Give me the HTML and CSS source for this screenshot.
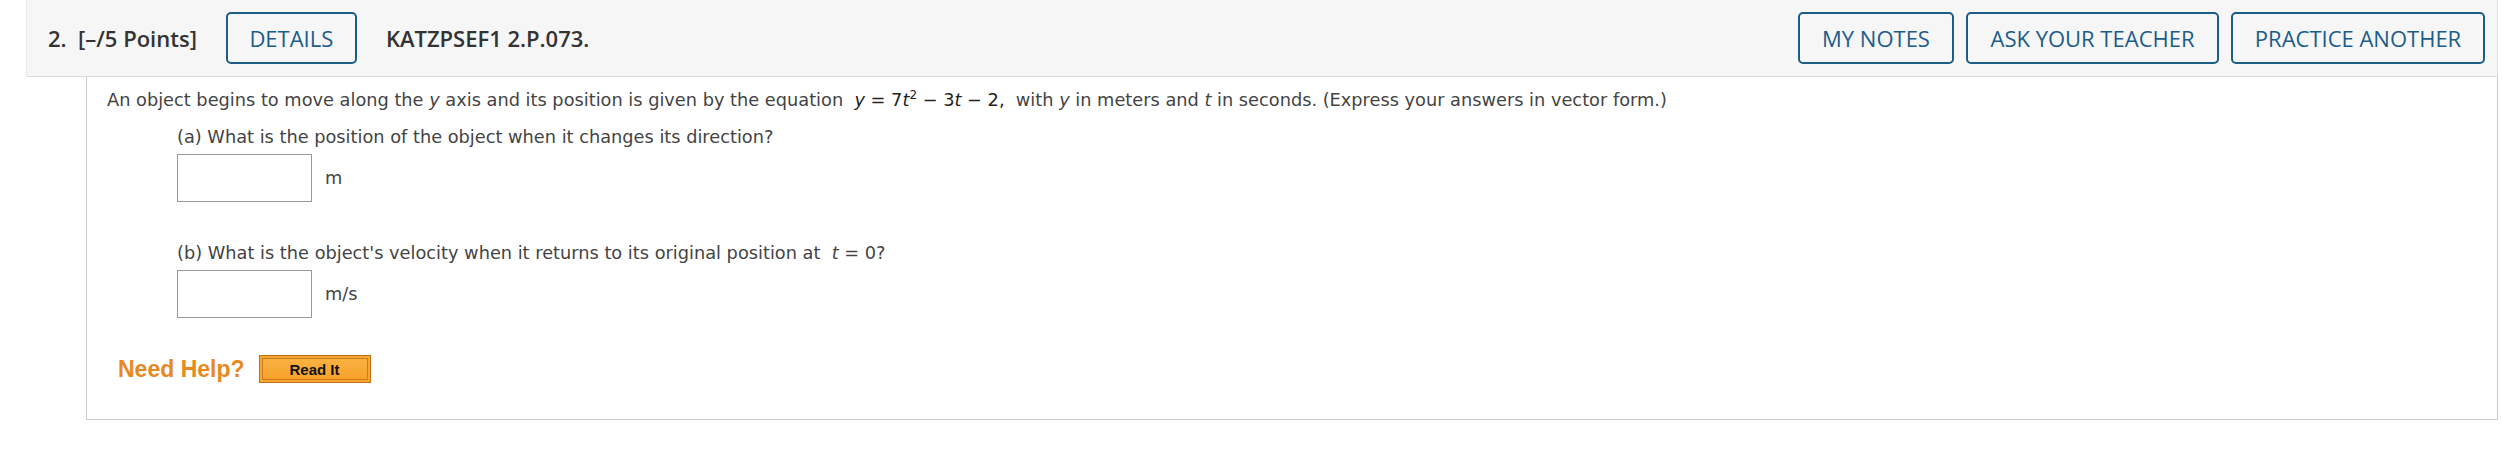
FILE: index.html
```html
<!DOCTYPE html>
<html lang="en">
<head>
<meta charset="utf-8">
<title>KATZPSEF1 2.P.073.</title>
<link rel="stylesheet" href="styles.css">
</head>
<body>
<div class="question">
  <div class="q-header">
    <span class="q-num">2.&nbsp; [–/5 Points]</span>
    <button class="btn-outline btn-details">DETAILS</button>
    <span class="q-code">KATZPSEF1 2.P.073.</span>
    <div class="q-actions">
      <button class="btn-outline">MY NOTES</button>
      <button class="btn-outline">ASK YOUR TEACHER</button>
      <button class="btn-outline">PRACTICE ANOTHER</button>
    </div>
  </div>
  <div class="q-body">
    <p class="stem">An object begins to move along the <i>y</i> axis and its position is given by the equation&nbsp; <span class="eq"><i>y</i> = 7<i>t</i><sup>2</sup> − 3<i>t</i> − 2,</span>&nbsp; with <i>y</i> in meters and <i>t</i> in seconds. (Express your answers in vector form.)</p>
    <div class="part">
      <p class="part-q">(a) What is the position of the object when it changes its direction?</p>
      <div class="answer-row">
        <input class="answer" type="text">
        <span class="unit">m</span>
      </div>
    </div>
    <div class="part part-b">
      <p class="part-q">(b) What is the object's velocity when it returns to its original position at&nbsp; <i>t</i> = 0?</p>
      <div class="answer-row">
        <input class="answer" type="text">
        <span class="unit">m/s</span>
      </div>
    </div>
    <div class="help-row">
      <span class="need-help">Need Help?</span>
      <button class="read-it">Read It</button>
    </div>
  </div>
</div>
</body>
</html>
```
FILE: styles.css
```css
html, body {
  margin: 0;
  padding: 0;
  background: #ffffff;
}

.question {
  margin: 0 4px 0 26px;
}

.q-header {
  box-sizing: border-box;
  height: 77px;
  display: flex;
  align-items: center;
  padding: 0 12px 1px 21px;
  background: #f6f6f6;
  border-left: 1px solid #e8e8e8;
  border-right: 1px solid #e0e0e0;
  border-bottom: 1px solid #dcdcdc;
  font-family: "Open Sans", "Liberation Sans", sans-serif;
  color: #333333;
}

.q-num {
  font-size: 22px;
  font-weight: 600;
  white-space: pre;
}

.btn-outline {
  box-sizing: border-box;
  height: 52px;
  padding: 0 24px;
  background: transparent;
  border: 2px solid #1c5d88;
  border-radius: 5px;
  color: #1b5d8a;
  font-family: "Open Sans", "Liberation Sans", sans-serif;
  font-size: 22px;
  font-weight: 400;
  cursor: pointer;
}

.btn-details {
  margin-left: 29px;
  width: 131px;
  padding: 0;
}

.q-code {
  margin-left: 29px;
  font-size: 22px;
  font-weight: 600;
}

.q-actions {
  margin-left: auto;
  display: flex;
  gap: 12px;
}

.q-actions .btn-outline:nth-child(1) { width: 156px; padding: 0; }
.q-actions .btn-outline:nth-child(2) { width: 253px; padding: 0; }
.q-actions .btn-outline:nth-child(3) { width: 254px; padding: 0; }

.q-body {
  box-sizing: border-box;
  margin-left: 60px;
  height: 343px;
  border: 1px solid #cccccc;
  border-top: none;
  padding: 13px 20px 0 20px;
  font-family: "DejaVu Sans", Verdana, sans-serif;
  font-size: 17.75px;
  color: #444444;
}

.stem {
  margin: 0;
  line-height: 20px;
  white-space: nowrap;
}

.eq {
  color: #222222;
}

.eq sup {
  font-size: 12px;
  line-height: 0;
  vertical-align: 7px;
}

.part {
  margin-left: 70px;
  margin-top: 17px;
}

.part-b {
  margin-top: 41px;
}

.part-q {
  margin: 0;
  line-height: 20px;
}

.answer-row {
  display: flex;
  align-items: center;
  margin-top: 7px;
}

.answer {
  box-sizing: border-box;
  width: 135px;
  height: 48px;
  margin: 0;
  border: 1px solid #9a9a9a;
  background: #ffffff;
}

.unit {
  margin-left: 13px;
  color: #444444;
}

.help-row {
  display: flex;
  align-items: center;
  margin-top: 37px;
  margin-left: 11px;
}

.need-help {
  font-family: "Liberation Sans", Arial, sans-serif;
  font-weight: 700;
  font-size: 23px;
  color: #e8891f;
}

.read-it {
  box-sizing: border-box;
  margin-left: 14px;
  width: 112px;
  height: 28px;
  padding: 0;
  border: 1px solid #c8700f;
  background: linear-gradient(#fbb445, #f5a027);
  box-shadow: inset 0 0 0 2px #f6a632, inset 0 0 0 3px #d07a1a;
  font-family: "Liberation Sans", Arial, sans-serif;
  font-weight: 700;
  font-size: 15px;
  color: #111111;
  cursor: pointer;
}
```
